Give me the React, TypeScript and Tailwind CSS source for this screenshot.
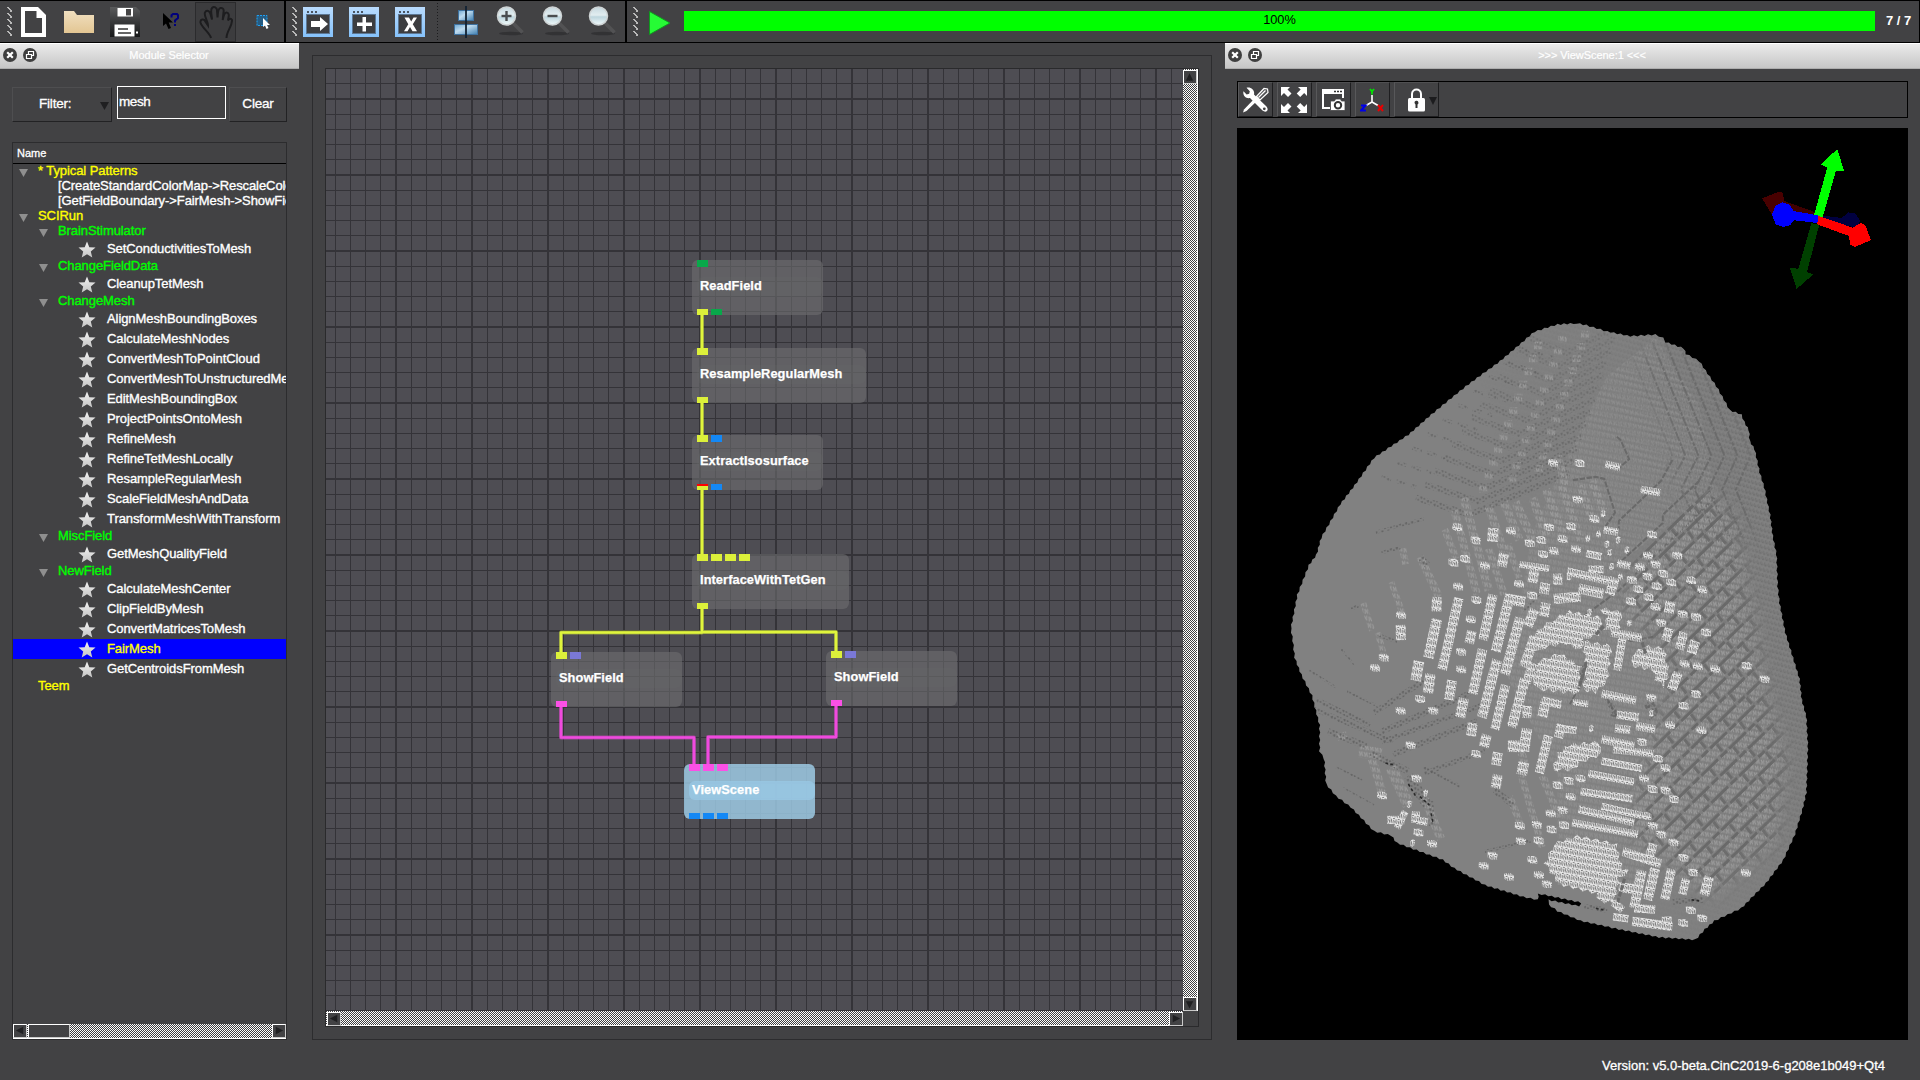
import React from "react";

const FONT = "font-['Liberation_Sans',Arial,sans-serif]";
const CHECK = "bg-[repeating-conic-gradient(#fff_0_25%,#3f3f41_0_50%)] bg-[length:2px_2px]";

/* ---------- small pieces ---------- */

function Grip() {
  return (
    <svg width="6" height="30" viewBox="0 0 6 30" shapeRendering="crispEdges" className="shrink-0">
      {[0, 6, 12, 18, 24].map((y) => (
        <path key={y} d={`M0 ${y + 0.5}h2M1 ${y + 1.5}h2M2 ${y + 2.5}h2M3 ${y + 3.5}h2M3 ${y + 4.5}h2`} stroke="#b9b9b9" />
      ))}
    </svg>
  );
}

function WindowIcon({ kind }: { kind: "arrow" | "plus" | "x" }) {
  return (
    <svg width="30" height="30" viewBox="0 0 30 30" className="shrink-0">
      <defs>
        <linearGradient id={"wi-" + kind} x1="0" y1="0" x2="0" y2="1">
          <stop offset="0" stopColor="#b9dbfd" />
          <stop offset="1" stopColor="#85c2fb" />
        </linearGradient>
      </defs>
      <rect width="30" height="30" fill={`url(#wi-${kind})`} />
      <path d="M4 4h2v2H4zM8 4h2v2H8zM12 4h2v2h-2z" fill="#4a5563" />
      <rect x="3.5" y="7.5" width="23" height="19" fill="#3c3d40" stroke="#5c7794" />
      {kind === "arrow" && <path d="M8 14h9v-4l8 7-8 7v-4H8z" fill="#fff" />}
      {kind === "plus" && <path d="M13.5 10h3.5v5.5h6V19h-6v5.500h-3.500V19H8v-3.500h5.500z" fill="#fff" />}
      {kind === "x" && <path d="M9.500 10.500h4.500l2.200 4 2.300-4H22l-4.200 6.800 4.200 7h-4.500l-2.500-4.300-2.500 4.300H9l4.300-7z" fill="#fff" />}
    </svg>
  );
}

function ZoomIcon({ sign }: { sign: "+" | "-" | "" }) {
  const id = sign === "+" ? "zin" : sign === "-" ? "zout" : "zfit";
  return (
    <svg width="30" height="30" viewBox="0 0 30 30" className="shrink-0">
      <defs>
        <linearGradient id={id} x1="0" y1="0" x2="0" y2="1">
          <stop offset="0" stopColor="#c6d8df" />
          <stop offset=".45" stopColor="#e2edf0" />
          <stop offset=".55" stopColor="#bdd5dd" />
          <stop offset="1" stopColor="#f2fbfc" />
        </linearGradient>
      </defs>
      <ellipse cx="15" cy="27.500" rx="12" ry="1.800" fill="#2c2c2e" opacity=".7" />
      <path d="M17 17l9.500 9.500" stroke="#525254" strokeWidth="3.500" />
      <circle cx="10.500" cy="10" r="9" fill={`url(#${id})`} stroke="#cfd4d5" strokeWidth="1.500" />
      {sign !== "" && <path d="M5.500 10h10" stroke="#4a4d4f" strokeWidth="2.400" />}
      {sign === "+" && <path d="M10.500 5v10" stroke="#4a4d4f" strokeWidth="2.400" />}
    </svg>
  );
}

function DockTitle({ title, className }: { title: string; className: string }) {
  return (
    <div className={"relative flex h-[26px] shrink-0 items-center justify-center border-t border-b border-t-white border-b-[#adadad] bg-linear-to-b from-[#ebebeb] to-[#c6c6c6] text-[11px] text-white [-webkit-text-stroke:0.200px] " + className}>
      <svg width="36" height="16" viewBox="0 0 36 16" className="absolute left-[2px] top-[3px]">
        <circle cx="8" cy="8" r="7" fill="#3f3f3f" />
        <path d="M5.200 5.200l5.600 5.600M10.800 5.200l-5.600 5.600" stroke="#fff" strokeWidth="2.200" />
        <circle cx="28" cy="8" r="7" fill="#3f3f3f" />
        <path d="M24.500 7.500h5v4h-5zM26.500 7v-2.500h5v4h-2" stroke="#fff" strokeWidth="1.200" fill="none" />
      </svg>
      <span className="pb-px">{title}</span>
    </div>
  );
}

function ArrowButton({ dir }: { dir: "l" | "r" | "u" | "d" }) {
  const d = { l: "M11 2.500v8L3 6.500z", r: "M4 2.500v8l8-4z", u: "M3 11h8L7 3z", d: "M3 4h8l-4 8z" }[dir];
  return (
    <div className="h-[14px] w-[14px] shrink-0 border border-white border-r-[#c9c9c9] border-b-[#c9c9c9] bg-[#424244]">
      <svg width="12" height="12" viewBox="1 0.500 13 13">
        <path d={d} fill="#1f1f21" />
      </svg>
    </div>
  );
}

/* ---------- top toolbar ---------- */

function TopBar() {
  return (
    <div className="flex h-[43px] shrink-0 bg-black py-px">
      <div className="flex h-[41px] w-[284px] items-center bg-[#424244] pl-[7px]">
        <Grip />
        <svg width="25" height="30" viewBox="0 0 25 30" className="ml-[8px]">
          <path fillRule="evenodd" fill="#fff" d="M0 0h17l8 8v22H0zM4 4v22h17V11h-5.500V4z" />
        </svg>
        <svg width="30" height="22" viewBox="0 0 30 22" className="ml-[18px]">
          <defs>
            <linearGradient id="fold" x1="0" y1="0" x2="0" y2="1">
              <stop offset="0" stopColor="#f0dfc0" />
              <stop offset="1" stopColor="#e3c693" />
            </linearGradient>
          </defs>
          <path d="M0 0h10l3 4h17v18H0z" fill="url(#fold)" />
        </svg>
        <svg width="30" height="30" viewBox="0 0 30 30" className="ml-[16px]">
          <defs>
            <linearGradient id="sv" x1="0" y1="0" x2="0" y2="1">
              <stop offset="0" stopColor="#5a5b5c" />
              <stop offset="1" stopColor="#161718" />
            </linearGradient>
          </defs>
          <path d="M0 0h26l4 4v26H0z" fill="url(#sv)" />
          <path d="M7.500 1h15.500v8.500H7.500z" fill="#fff" />
          <path d="M16 2h5v6.500h-5z" fill="#444" />
          <path d="M4.500 17.500h20v12h-20z" fill="#fff" />
          <path d="M8 22h10M8 26h13" stroke="#333" strokeWidth="1.500" />
          <path d="M26 24.500h2v2h-2z" fill="#fff" />
        </svg>
        <svg width="18" height="18" viewBox="0 0 18 18" className="ml-[22px]">
          <path d="M1 0v13l3-2.500 2.500 5.500 2.500-1-2.300-5.500H11z" fill="#000" />
          <path d="M9.500 4.500V2.200L11 1h4l1 1.200V5l-3 2.500v2M13 11v2" stroke="#00007c" strokeWidth="2" fill="none" />
        </svg>
        <div className="ml-[15px] flex h-[40px] w-[41px] items-start justify-center border border-[#2b2b2d] bg-[#3c3c3e] pt-[3px]">
          <svg width="34" height="34" viewBox="0 0 34 34" fill="none" stroke="#1d1d1f" strokeWidth="2">
            <path d="M12 32c-1-5-9-10-10.500-15.500C1 13 5 12.500 6 15l3 4.500C9 15 4.500 9.500 6 6.500S11 5 11.500 8l1.500 5.500C13 10 11 4 13 2s5-.5 5 2.500l.5 7c.5-4 0-9 3-9.500s3.500 2 3 4.500l-.8 7.500c1-4 1.300-7.500 3.800-7.500s2.500 3 2 5l-.5 3c1-2 3-2.500 4-.5.5 6-5.500 11-5.500 18" />
          </svg>
        </div>
        <svg width="16" height="16" viewBox="0 0 16 16" className="ml-[20px]">
          <rect x="1" y="1.500" width="10" height="10" fill="#255c83" stroke="#1fa1f4" strokeDasharray="2 1" />
          <path d="M7 4v9l2-1.500L10.500 15l2-1-1.500-3h3z" fill="#fff" />
        </svg>
      </div>
      <div className="ml-[2px] flex h-[41px] w-[339px] items-center bg-[#424244] pl-[6px]">
        <Grip />
        <div className="ml-[5px] flex gap-[16px]">
          <WindowIcon kind="arrow" />
          <WindowIcon kind="plus" />
          <WindowIcon kind="x" />
        </div>
        <div className="ml-[12px] h-[37px] w-px bg-[repeating-linear-gradient(#1c1c1e_0_1px,transparent_1px_3px)]" />
        <svg width="24" height="32" viewBox="0 0 24 32" className="ml-[16px] shrink-0">
          <defs>
            <linearGradient id="al" x1="0" y1="0" x2="1" y2="1">
              <stop offset="0" stopColor="#6fa8d2" />
              <stop offset=".4" stopColor="#bfdcf0" />
              <stop offset="1" stopColor="#3f7fb0" />
            </linearGradient>
          </defs>
          <rect x="4.500" y="4.500" width="15" height="10" fill="url(#al)" stroke="#3f72a0" />
          <rect x=".5" y="18.500" width="23" height="10" fill="url(#al)" stroke="#3f72a0" />
          <path d="M12 0v32" stroke="#123" strokeWidth="1.800" />
        </svg>
        <div className="mb-[2px] ml-[18px] flex gap-[16px]">
          <ZoomIcon sign="+" />
          <ZoomIcon sign="-" />
          <ZoomIcon sign="" />
        </div>
      </div>
      <div className="ml-[2px] mr-px flex h-[41px] flex-1 items-center bg-[#424244] pl-[6px]">
        <Grip />
        <svg width="22" height="24" viewBox="0 0 22 24" className="ml-[10px] mt-[3px]">
          <path d="M.5.500L21 12 .5 23.500z" fill="#26fb35" stroke="#0f9a1e" />
        </svg>
        <div className="mb-px ml-[13px] flex h-[20px] w-[1191px] items-center justify-center bg-[#00ff00] pb-[2px] text-[12.800px] text-black">
          100%
        </div>
        <span className="ml-[11px] pb-px text-[13px] font-bold whitespace-pre text-white">7 / 7</span>
      </div>
    </div>
  );
}

/* ---------- module selector ---------- */

type Row = { t: string; k: "top" | "cat" | "plain" | "mod" | "leaf"; sel?: boolean };
const ROWS: Row[] = [
  { t: "* Typical Patterns", k: "top" },
  { t: "[CreateStandardColorMap->RescaleColorMap]", k: "plain" },
  { t: "[GetFieldBoundary->FairMesh->ShowField]", k: "plain" },
  { t: "SCIRun", k: "top" },
  { t: "BrainStimulator", k: "cat" },
  { t: "SetConductivitiesToMesh", k: "mod" },
  { t: "ChangeFieldData", k: "cat" },
  { t: "CleanupTetMesh", k: "mod" },
  { t: "ChangeMesh", k: "cat" },
  { t: "AlignMeshBoundingBoxes", k: "mod" },
  { t: "CalculateMeshNodes", k: "mod" },
  { t: "ConvertMeshToPointCloud", k: "mod" },
  { t: "ConvertMeshToUnstructuredMesh", k: "mod" },
  { t: "EditMeshBoundingBox", k: "mod" },
  { t: "ProjectPointsOntoMesh", k: "mod" },
  { t: "RefineMesh", k: "mod" },
  { t: "RefineTetMeshLocally", k: "mod" },
  { t: "ResampleRegularMesh", k: "mod" },
  { t: "ScaleFieldMeshAndData", k: "mod" },
  { t: "TransformMeshWithTransform", k: "mod" },
  { t: "MiscField", k: "cat" },
  { t: "GetMeshQualityField", k: "mod" },
  { t: "NewField", k: "cat" },
  { t: "CalculateMeshCenter", k: "mod" },
  { t: "ClipFieldByMesh", k: "mod" },
  { t: "ConvertMatricesToMesh", k: "mod" },
  { t: "FairMesh", k: "mod", sel: true },
  { t: "GetCentroidsFromMesh", k: "mod" },
  { t: "Teem", k: "leaf" },
];

function Tri() {
  return (
    <svg width="9" height="8" viewBox="0 0 9 8" className="mt-[3px] mr-[14px] shrink-0">
      <path d="M0 0h9L4.500 8z" fill="#8f8f8f" />
    </svg>
  );
}

function TreeRow({ r }: { r: Row }) {
  if (r.k === "mod")
    return (
      <div className={"flex h-[20px] items-center pl-[65px] whitespace-nowrap " + (r.sel ? "bg-[#0000ff] text-[#ffff00]" : "text-white")}>
        <svg width="18" height="17" viewBox="0 0 18 17" className="mr-[11px] shrink-0">
          <defs>
            <linearGradient id="star" x1="0" y1="0" x2="0" y2="1">
              <stop offset="0" stopColor="#f2f2f2" />
              <stop offset="1" stopColor="#c4c4c4" />
            </linearGradient>
          </defs>
          <path d="M9 .5l2.300 5.700 6.200.4-4.700 4 1.500 6L9 13.300l-5.300 3.300 1.500-6-4.700-4 6.200-.4z" fill="url(#star)" />
        </svg>
        <span>{r.t}</span>
      </div>
    );
  if (r.k === "plain") return <div className="h-[15px] pl-[45px] leading-[13px] whitespace-nowrap text-white">{r.t}</div>;
  if (r.k === "leaf") return <div className="h-[15px] pl-[25px] leading-[13px] text-[#ffff00]">{r.t}</div>;
  return (
    <div className={"flex h-[15px] items-center leading-[13px] whitespace-nowrap " + (r.k === "top" ? "pl-[6px] text-[#ffff00]" : "pl-[26px] text-[#00ff00]")}>
      <Tri />
      <span className="-mt-[2px] -ml-[4px]">{r.t}</span>
    </div>
  );
}

function ModuleSelector() {
  const bevel = "border border-t-[#4e4e50] border-l-[#4e4e50] border-r-[#222224] border-b-[#222224]";
  return (
    <div className="flex w-[299px] shrink-0 flex-col">
      <DockTitle title="Module Selector" className="pl-[39px]" />
      <div className="mt-[17px] ml-[12px] flex items-start text-[13.500px] text-white [-webkit-text-stroke:0.300px]">
        <div className={"mt-px flex h-[35px] w-[100px] items-center pb-px pl-[26px] " + bevel}>
          <span className="w-[61px] tracking-[-0.200px]">Filter:</span>
          <svg width="9" height="8" viewBox="0 0 9 8" className="mt-[4px]">
            <path d="M0 0h9L4.500 8z" fill="#1f1f21" />
          </svg>
        </div>
        <div className="ml-[5px] flex h-[33px] w-[109px] border border-white pl-[1px] leading-[29px] tracking-[-0.400px]">mesh</div>
        <div className={"mt-px ml-[3px] flex h-[35px] w-[58px] items-center justify-center tracking-[-0.200px] " + bevel}>Clear</div>
      </div>
      <div className="mt-[20px] ml-[12px] flex h-[898px] w-[275px] flex-col overflow-hidden border border-[#2c2c2e]">
        <div className="flex h-[21px] shrink-0 items-center border-b border-black pl-[4px] text-[11px] text-white [-webkit-text-stroke:0.300px]">Name</div>
        <div className="flex-1 overflow-hidden text-[13px] tracking-[-0.080px] [-webkit-text-stroke:0.350px]">
          {ROWS.map((r, i) => (
            <TreeRow key={i} r={r} />
          ))}
        </div>
        <div className={"flex h-[15px] shrink-0 items-center border-b border-b-white " + CHECK}>
          <ArrowButton dir="l" />
          <div className="ml-[1px] h-[14px] w-[42px] border border-white border-r-[#c9c9c9] border-b-[#c9c9c9] bg-[#424244]" />
          <div className="flex-1" />
          <ArrowButton dir="r" />
        </div>
      </div>
    </div>
  );
}

/* ---------- network canvas ---------- */

const Y = "#dcf03a";
const G = "#08a84a";
const B = "#1488f5";
const V = "#7a78d6";
const P = "#fb50e6";

type ModuleNode = { n: string; x: number; y: number; w: number; i: string[]; o: string[]; blue?: boolean };
const NODES: ModuleNode[] = [
  { n: "ReadField", x: 692, y: 260, w: 131, i: [G], o: [Y, G] },
  { n: "ResampleRegularMesh", x: 692, y: 348, w: 174, i: [Y], o: [Y] },
  { n: "ExtractIsosurface", x: 692, y: 435, w: 131, i: [Y, B], o: [Y, B] },
  { n: "InterfaceWithTetGen", x: 692, y: 554, w: 157, i: [Y, Y, Y, Y], o: [Y] },
  { n: "ShowField", x: 551, y: 652, w: 131, i: [Y, V], o: [P] },
  { n: "ShowField", x: 826, y: 651, w: 131, i: [Y, V], o: [P] },
  { n: "ViewScene", x: 684, y: 764, w: 131, i: [P, P, P], o: [B, B, B], blue: true },
];

const WIRES: [string, string][] = [
  ["M702 314V350M702 403V437M702 489V556M702 608V632.500H561V654M702 632H836V653", "#e0f53c"],
  ["M561 706V737.500H694V766M836 705V737H708V766", "#f04ade"],
];

function Node({ m }: { m: ModuleNode }) {
  return (
    <div
      className={"absolute h-[55px] rounded-[6px] " + (m.blue ? "bg-[#a2d2ee]/80" : "bg-[#6e6e70]/60")}
      style={{ left: m.x - 326, top: m.y - 69, width: m.w }}
    >
      <div className="absolute top-0 left-[5px] flex gap-[3px]">
        {m.i.map((c, i) => (
          <div key={i} className="h-[7px] w-[11px]" style={{ background: c }} />
        ))}
      </div>
      <div
        className={"absolute top-[17px] right-0 left-[5px] h-[19px] rounded-[6px] pl-[3px] text-[12.800px] leading-[17px] font-bold tracking-[0.080px] whitespace-nowrap text-white [-webkit-text-stroke:0.250px] " + (m.blue ? "bg-[#9acbe8]/70" : "bg-[#666668]/25")}
      >
        {m.n}
      </div>
      <div className="absolute bottom-0 left-[5px] flex gap-[3px]">
        {m.o.map((c, i) => (
          <div
            key={i}
            className={"h-[6px] w-[11px] " + (m.n === "ExtractIsosurface" && i === 0 ? "border-t-2 border-[#ff0000]" : "")}
            style={{ backgroundColor: c }}
          />
        ))}
      </div>
    </div>
  );
}

function Canvas() {
  const offs = [16, 31, 46, 61];
  return (
    <div className="mt-[12px] ml-[13px] flex h-[985px] w-[900px] shrink-0 border border-[#2c2c2e]">
      <div className="mt-[12px] ml-[12px] flex h-[959px] w-[874px] flex-col border border-[#2a2a2c]">
        <div className="flex h-[942px]">
          <div className="relative h-[942px] w-[857px] overflow-hidden bg-[#4e4d53]">
            <svg width="857" height="942" viewBox="326 69 857 942" className="absolute inset-0">
              <defs>
                <pattern id="grid" x="395" y="22" width="76" height="76" patternUnits="userSpaceOnUse">
                  <path d="M0 0h2v76h-2zM0 0h76v2h-76z" fill="#343338" />
                  {offs.map((o) => (
                    <path key={o} d={`M${o} 0h1v76h-1zM0 ${o}h76v1h-76z`} fill="#343338" />
                  ))}
                </pattern>
              </defs>
              <rect x="326" y="69" width="857" height="942" fill="url(#grid)" shapeRendering="crispEdges" />
              {WIRES.map(([d, c]) => (
                <g key={c} fill="none" stroke={c} strokeLinejoin="round">
                  <path d={d} strokeWidth="4" opacity=".5" />
                  <path d={d} strokeWidth="2.400" />
                </g>
              ))}
            </svg>
            {NODES.map((m, i) => (
              <Node key={i} m={m} />
            ))}
          </div>
          <div className={"flex w-[15px] flex-col justify-between border-r border-r-white pt-px " + CHECK}>
            <ArrowButton dir="u" />
            <ArrowButton dir="d" />
          </div>
        </div>
        <div className="flex h-[15px]">
          <div className={"flex w-[857px] justify-between border-b border-b-white pl-px pt-px " + CHECK}>
            <ArrowButton dir="l" />
            <ArrowButton dir="r" />
          </div>
          <div className="flex-1" />
        </div>
      </div>
    </div>
  );
}

/* ---------- mesh rendering ---------- */

const OUTLINE_POINTS =
  "880,55 905,60 960,75 1020,86 1085,82 1105,90 1112,100 1160,115 1165,128 1200,145 1222,175 1245,205 1280,262 1310,272 1318,290 1330,310 1332,335 1345,355 1358,410 1370,445 1385,510 1392,560 1402,605 1405,680 1410,720 1425,790 1445,850 1462,900 1468,950 1480,990 1484,1060 1482,1120 1480,1170 1470,1210 1450,1270 1420,1330 1375,1385 1310,1445 1240,1475 1215,1495 1190,1520 1095,1514 990,1495 890,1475 830,1452 806,1436 806,1425 885,1440 892,1432 780,1410 778,1425 740,1418 640,1390 560,1350 530,1330 410,1290 395,1272 350,1262 290,1205 250,1178 225,1150 220,1090 208,1072 208,1010 188,940 160,890 143,850 138,810 133,780 150,700 180,630 200,605 212,565 262,485 300,440 350,375 440,320 500,272 590,205 680,145 770,75 830,58";

/* breaks every silhouette edge into short steps so that it reads as a voxel boundary */
function stepped(points: string, step: number, amp: number) {
  const p = points.split(" ").map((s) => s.split(",").map(Number));
  let d = "";
  let k = 0;
  p.forEach(([x, y], i) => {
    const [nx, ny] = p[(i + 1) % p.length];
    const len = Math.hypot(nx - x, ny - y);
    const n = Math.max(1, Math.round(len / step));
    for (let j = 0; j < n; j++) {
      const s = (k++ % 2 ? 1 : -1) * amp;
      const px = x + ((nx - x) * j) / n + (s * (ny - y)) / len;
      const py = y + ((ny - y) * j) / n - (s * (nx - x)) / len;
      d += (d ? "L" : "M") + px.toFixed(1) + " " + py.toFixed(1);
    }
  });
  return d + "z";
}
const OUTLINE = stepped(OUTLINE_POINTS, 9, 1.6);

const STRIPS: number[][] = [
  [515, 706, 513, 740, 26], [515, 758, 492, 850, 27], [468, 858, 459, 904, 28], [572, 708, 528, 878, 25], [498, 888, 491, 934, 27],
  [554, 904, 546, 950, 26], [661, 700, 635, 808, 25], [606, 786, 599, 816, 25], [634, 830, 608, 936, 25], [585, 946, 575, 992, 27],
  [706, 700, 668, 835, 26], [698, 710, 745, 718, 26], [672, 855, 632, 992, 26], [732, 755, 692, 890, 26], [694, 915, 666, 1020, 24],
  [770, 800, 742, 872, 26], [745, 900, 710, 1015, 26], [738, 978, 762, 978, 30], [806, 1035, 782, 1124, 24], [750, 1018, 742, 1072, 28],
  [700, 1060, 745, 1060, 28], [674, 1075, 669, 1105, 26], [674, 1128, 668, 1160, 26], [742, 1098, 736, 1128, 28], [608, 1005, 604, 1036, 26],
  [645, 1033, 637, 1062, 26], [730, 628, 808, 638, 16], [770, 638, 764, 672, 26], [830, 650, 830, 676, 24], [855, 645, 985, 672, 20],
  [980, 660, 966, 700, 26], [885, 685, 950, 698, 24], [820, 710, 890, 705, 24], [770, 735, 752, 775, 26], [800, 720, 794, 752, 26],
  [798, 672, 794, 698, 26], [690, 602, 684, 634, 26], [662, 542, 660, 574, 28], [1000, 800, 985, 880, 22], [970, 790, 1050, 803, 20],
  [1145, 885, 1128, 926, 26], [1160, 790, 1148, 830, 24], [1122, 780, 1112, 810, 24], [1190, 810, 1180, 840, 26], [1125, 716, 1120, 744, 26],
  [945, 935, 1035, 952, 20], [985, 985, 1042, 992, 20], [980, 1018, 1020, 1022, 20], [1035, 1012, 1085, 1020, 20], [790, 952, 840, 962, 20],
  [800, 950, 790, 990, 26], [870, 955, 910, 960, 16], [945, 1043, 1030, 1060, 20], [975, 1068, 1080, 1078, 18], [945, 1095, 1050, 1113, 18],
  [910, 1125, 1030, 1145, 18], [890, 1168, 1025, 1185, 18], [945, 1203, 1050, 1225, 18], [885, 1210, 1030, 1242, 18], [868, 1242, 1040, 1270, 18],
  [1000, 1310, 1100, 1340, 22], [1080, 1292, 1068, 1330, 24], [1050, 1355, 1030, 1445, 26], [1085, 1350, 1065, 1425, 26], [1128, 1352, 1110, 1424, 24],
  [1166, 1375, 1156, 1412, 22], [1226, 1370, 1213, 1414, 26], [975, 1465, 1015, 1470, 18], [1025, 1476, 1130, 1488, 22], [1115, 1465, 1115, 1495, 26],
  [1030, 1445, 1085, 1448, 20], [840, 1008, 832, 1040, 24], [835, 1018, 880, 1022, 18], [420, 772, 420, 808, 26], [905, 602, 945, 610, 18],
  [1047, 450, 1098, 458, 18], [955, 390, 993, 398, 18], [950, 545, 988, 552, 18], [985, 625, 1020, 632, 18], [385, 1235, 430, 1235, 20],
  [432, 1215, 410, 1255, 18], [460, 1215, 458, 1242, 22], [462, 1236, 490, 1240, 18], [910, 640, 950, 640, 18], [760, 822, 800, 815, 26],
  [765, 862, 748, 910, 22], [990, 1395, 1035, 1400, 24], [975, 1430, 1000, 1450, 20],
];

const BLOBS: number[][] = [
  [818, 387], [888, 388], [882, 474], [926, 520], [568, 540], [708, 548], [616, 571], [808, 540], [865, 538], [757, 578], [787, 570],
  [843, 568], [1077, 557], [820, 596], [878, 592], [792, 604], [588, 615], [558, 624], [640, 631], [570, 681], [618, 713], [603, 759],
  [578, 836], [578, 878], [421, 749], [376, 850], [353, 874], [471, 948], [420, 976], [505, 976], [446, 1058], [617, 1078], [461, 1137],
  [371, 1177], [466, 1265], [502, 1292], [660, 1320], [637, 1344], [703, 1371], [764, 1330], [781, 1366], [802, 1388], [734, 1286],
  [731, 1249], [776, 1247], [780, 1284], [814, 1258], [847, 1248], [812, 1220], [843, 1212], [864, 1180], [830, 1153], [859, 1142],
  [890, 1137], [1066, 607], [1143, 607], [1045, 634], [1086, 628], [1106, 650], [1065, 657], [1024, 665], [1127, 671], [1179, 666],
  [1208, 688], [1089, 680], [1041, 687], [1068, 706], [1022, 716], [1086, 729], [1157, 746], [1192, 753], [1101, 767], [1218, 790],
  [1162, 864], [1196, 870], [1242, 877], [1324, 869], [1371, 901], [1192, 936], [1159, 964], [1124, 1010], [1206, 1022], [1075, 945],
  [1051, 1050], [1092, 1090], [1112, 1112], [1056, 1137], [1078, 1162], [1112, 1165], [1134, 1186], [1079, 1249], [1101, 1270],
  [1133, 1289], [1159, 1325], [1184, 1360], [1322, 1361], [1178, 1450], [1158, 1480], [1208, 1469], [1062, 1226], [729, 674], [764, 702],
];

/* half-width facets */
const SPECKS: number[][] = [
  [949, 508], [909, 567], [937, 556], [988, 570], [959, 580], [966, 600], [1011, 594], [971, 633], [994, 658], [1017, 768], [918, 1018],
  [485, 1172], [442, 1198], [451, 1290], [914, 742], [1075, 982], [860, 658],
];

const FIELDS = [
  "825,755 860,740 945,755 938,795 900,805 890,832 850,815 770,830 758,802 790,777",
  "780,858 835,840 890,870 885,935 780,925 762,900",
  "895,810 970,822 960,905 930,932 897,926 905,870",
  "942,732 998,742 988,790 952,785 960,752",
  "1030,837 1065,823 1108,828 1120,885 1110,920 1087,903 1080,880 1022,868",
  "820,1292 880,1273 983,1292 998,1352 1018,1358 990,1372 978,1433 940,1428 932,1410 835,1388 797,1340",
  "817,1116 832,1077 860,1057 938,1050 943,1080 890,1098 870,1116",
].map((p) => stepped(p, 13, 4));

/* raised light terraces */
const LIGHT: number[][] = [
  [425, 590, 433, 628, 18], [470, 610, 520, 705, 20], [395, 670, 425, 745, 16], [322, 720, 345, 785, 16], [360, 790, 378, 850, 16],
  [535, 545, 565, 615, 18], [560, 500, 620, 700, 20], [585, 470, 650, 690, 22], [650, 490, 690, 600, 22], [690, 480, 730, 570, 22],
  [720, 480, 765, 570, 22], [765, 470, 800, 560, 22], [800, 450, 845, 560, 22], [840, 440, 890, 570, 20], [830, 370, 850, 440, 20],
  [890, 440, 920, 520, 20], [920, 430, 950, 500, 20], [345, 1090, 372, 1170, 22], [395, 1110, 440, 1200, 30], [480, 1180, 525, 1280, 22],
  [735, 1075, 745, 1100, 20], [735, 1130, 790, 1300, 18], [790, 1130, 835, 1230, 20], [705, 1180, 735, 1250, 18], [255, 1038, 280, 1035, 20],
  [310, 1072, 370, 1080, 30], [650, 590, 690, 700, 20], [700, 580, 730, 660, 18],
];

/* shaded gutters */
const SHADE: number[][] = [
  [350, 980, 480, 905, 14], [370, 1025, 600, 935, 14], [370, 1050, 640, 960, 12], [400, 1080, 620, 1000, 14], [480, 1125, 640, 1070, 12],
  [200, 950, 340, 1010, 12], [190, 970, 400, 1050, 12], [230, 1025, 330, 1060, 16], [340, 1075, 440, 1120, 16], [440, 1130, 490, 1200, 26],
  [500, 1190, 500, 1250, 14], [480, 1110, 575, 1155, 8], [280, 930, 360, 965, 6], [180, 880, 250, 920, 6], [265, 830, 300, 868, 5],
  [360, 795, 410, 812, 8], [665, 1165, 715, 1200, 16], [355, 552, 480, 520, 8], [290, 735, 312, 725, 8], [370, 600, 420, 588, 8],
  [470, 610, 490, 630, 16], [640, 1310, 760, 1285, 8], [740, 740, 790, 690, 8], [270, 1160, 350, 1200, 5], [250, 1110, 320, 1140, 5],
  [950, 930, 985, 990, 14], [1130, 1430, 1210, 1425, 14], [900, 870, 880, 920, 12], [1060, 960, 1090, 985, 14], [900, 1440, 960, 1450, 12],
];

const CREASES =
  "M985 325l10 8 22 45-25 20M870 428l60-8 22 5 28 80-30 40M1130 380l-30 50-110 95v20M1200 430l-95 80v20l-120 100M1240 470l-250 220-90 60M950 930l35 60-20-5M905 870l-18 50-25 40M1060 970l20-12 10 20-20 20M1080 800l-60 10-40-40";

function Lines({ data, stroke }: { data: number[][]; stroke: string }) {
  return (
    <g stroke={stroke}>
      {data.map(([a, b, c, d, w], i) => (
        <line key={i} x1={a} y1={b} x2={c === a ? c + 0.5 : c} y2={d === b ? d + 0.5 : d} strokeWidth={w} />
      ))}
    </g>
  );
}

function Heart() {
  const chev = Array.from({ length: 13 }, (_, k) => k);
  return (
    <svg x="3" y="172" width="600" height="660" viewBox="0 0 1568 1568" preserveAspectRatio="none">
      <defs>
        <clipPath id="body"><path d={OUTLINE} /></clipPath>
        <pattern id="white" width="12" height="15" patternUnits="userSpaceOnUse" patternTransform="rotate(9)">
          <rect width="12" height="15" fill="#e6e6e6" />
          <path d="M0 2.500L4 6V10M8 0V5L11 10M0 14h5" stroke="#777" strokeWidth="2.800" fill="none" />
        </pattern>
        <pattern id="light" width="13" height="16" patternUnits="userSpaceOnUse" patternTransform="rotate(9)">
          <path d="M2 1v6l3 5M8 2l3 5v6" stroke="#9c9c9c" strokeWidth="3.200" fill="none" />
        </pattern>
        <pattern id="dark" width="16" height="11" patternUnits="userSpaceOnUse" patternTransform="rotate(-8)">
          <path d="M1 2h6M9 7h5M4 2v4M11 5v3" stroke="#5f5f5f" strokeWidth="2.800" fill="none" />
        </pattern>
        <pattern id="grain" width="10" height="13" patternUnits="userSpaceOnUse" patternTransform="rotate(14)">
          <path d="M2 0v5l3 4M7 3v6" stroke="#6c6c6c" strokeWidth="2.600" fill="none" />
        </pattern>
        <linearGradient id="edge" gradientUnits="userSpaceOnUse" x1="800" y1="800" x2="1480" y2="600">
          <stop offset="0" stopColor="#fff" stopOpacity="0" />
          <stop offset=".5" stopColor="#fff" stopOpacity=".3" />
          <stop offset="1" stopColor="#fff" stopOpacity="1" />
        </linearGradient>
        <mask id="edgeMask"><rect width="1568" height="1568" fill="url(#edge)" /></mask>
        <filter id="soft" x="-10%" y="-10%" width="120%" height="120%"><feGaussianBlur stdDeviation="22" /></filter>
        <mask id="slope">
          <path filter="url(#soft)" fill="#fff" d="M1030 600L1150 400L1290 500L1350 780L1370 900L1430 1100L1400 1290L1230 1420L1130 1350L1020 1270L1040 1150L1090 1000L1130 900L1080 800L1000 740z" />
        </mask>
        <mask id="crown">
          <path filter="url(#soft)" fill="#fff" d="M1085 90L1180 115L1300 270L1360 440L1330 590L1180 560L1130 420L1130 350L1085 240L1040 150z" />
        </mask>
      </defs>
      <path d={OUTLINE} fill="#818181" />
      <g clipPath="url(#body)">
        <path d="M850 380L960 180L1085 90L1200 250L1240 450L1000 620L1120 880L1050 1400L830 1390L830 1130L700 900L760 560z" fill="url(#light)" opacity=".5" />
        <rect width="1568" height="1568" fill="url(#grain)" mask="url(#edgeMask)" />
        <g fill="none" stroke="url(#dark)" strokeWidth="15">
          {chev.map((k) => (
            <path key={k} d={`M${460 + k * 24} ${470 - k * 32}l${140 - k * 3} 40l${260 - k * 10} -${100 - k * 3}`} opacity={0.85 - k * 0.03} />
          ))}
          {chev.slice(0, 10).map((k) => (
            <path key={k} d={`M${370 + k * 40} ${420 - k * 34}l90 24`} strokeWidth="9" strokeDasharray="26 14" opacity=".8" />
          ))}
        </g>
        <g fill="url(#light)">
          {chev.slice(0, 12).map((k) => (
            <g key={k}>
              <path d={`M${625 + k * 13} ${440 - k * 31}h22v18h-22zM${700 + k * 12} ${415 - k * 30}h22v16h-22zM${770 + k * 11} ${392 - k * 29}h22v16h-22z`} />
            </g>
          ))}
        </g>
        <g mask="url(#crown)" stroke="#666" strokeWidth="5" fill="none" strokeDasharray="22 5 8 4">
          {[0, 1, 2, 3, 4, 5, 6].map((k) => (
            <path key={k} d={`M${1010 + k * 34} 100L${1130 + k * 34} 370L${1080 + k * 36} 450L${1170 + k * 32} 600`} opacity=".8" />
          ))}
        </g>
        <path d={CREASES} fill="none" stroke="#696969" strokeWidth="5" strokeDasharray="14 4" />
        <g mask="url(#slope)">
          {Array.from({ length: 26 }, (_, k) => (
            <g key={k}>
              <line x1="900" y1={760 + k * 44} x2="1500" y2={230 + k * 44} stroke="url(#light)" strokeWidth="24" strokeDasharray="70 10" strokeDashoffset={k * 23} />
              <line x1="900" y1={740 + k * 44} x2="1500" y2={210 + k * 44} stroke="#646464" strokeWidth="7" strokeDasharray="58 9 22 8" strokeDashoffset={k * 31} opacity=".8" />
              <line x1="900" y1={760 + k * 44} x2="1500" y2={230 + k * 44} stroke="#656565" strokeWidth="20" strokeDasharray="7 73" strokeDashoffset={k * 23 + 10} opacity=".7" />
            </g>
          ))}
        </g>
        <Lines data={LIGHT} stroke="url(#light)" />
        <Lines data={SHADE} stroke="url(#dark)" />
        <g fill="url(#white)">
          {FIELDS.map((d, i) => (
            <path key={i} d={d} />
          ))}
          {BLOBS.map(([x, y], i) => (
            <path key={i} d={`M${x - 13} ${y - 9}h18l8 5v13h-17l-9-5z`} />
          ))}
          {SPECKS.map(([x, y], i) => (
            <path key={i} d={`M${x - 6} ${y - 5}l6-4 6 2v12l-7 4-5-3z`} />
          ))}
        </g>
        <Lines data={STRIPS} stroke="url(#white)" />
        <g stroke="#6a6a6a" strokeWidth="8" fill="none" strokeDasharray="12 4">
          <path d="M905 860l-20 65M950 775l-20 20M1005 1375l-18 55M1060 840l-10 -30" />
        </g>
        <path d="M440 1150l20 30M470 1180l25 20M380 1100l25 5M500 1220l5 25M1180 1425l25 3M930 1445l25 5" stroke="#2a2a2a" strokeWidth="4" strokeDasharray="7 6" />
      </g>
    </svg>
  );
}

function Axes() {
  return (
    <svg x="503" y="2" width="160" height="170" viewBox="0 0 480 510">
      <g shapeRendering="crispEdges">
        <path d="M130 212L235 250L232 268L100 228z" fill="#3f0000" />
        <path d="M66 205L115 186L128 188L133 212L95 252z" fill="#480000" />
        <path d="M235 255L305 264L325 247L345 250L361 272L350 292L235 275z" fill="#000040" />
        <path d="M214 280L238 283L201 426L220 433L170 477L150 414L175 416z" fill="#004000" />
        <path d="M222 256L262 112L242 103L292 57L312 123L288 122L248 262z" fill="#00ff00" />
        <path d="M234 256L160 243L150 224L128 217L107 226L96 254L107 283L130 291L150 286L162 271L234 279z" fill="#0000ff" />
        <path d="M234 257L338 293L362 279L376 286L393 330L345 351L330 343L327 318L232 283z" fill="#ff0000" />
      </g>
    </svg>
  );
}

function ToolButton({ w, children }: { w: string; children: React.ReactNode }) {
  return (
    <div className={"flex h-[35px] items-center border border-t-[#505052] border-l-[#58585a] border-r-[#1e1e20] border-b-[#1e1e20] " + w}>
      {children}
    </div>
  );
}

function ViewScene() {
  return (
    <div className="ml-[13px] flex w-[695px] shrink-0 flex-col">
      <DockTitle title=">>> ViewScene:1 <<<" className="pl-[39px] tracking-[-0.050px]" />
      <div className="mt-[12px] ml-[12px] flex h-[37px] w-[671px] gap-[4px] border border-black">
        <ToolButton w="w-[35px] pl-[4px]">
          <svg width="26" height="26" viewBox="0 0 26 26">
            <path d="M0 25.500l1-3L13 10l2.500 2.500L3.500 24z" fill="#fff" />
            <path d="M13.500 9.500L21 1.500l3.500.5.5 3.500-8 7.500z" fill="#505052" stroke="#fff" strokeWidth="1.200" />
            <path d="M15.500 10.500l7-7" stroke="#fff" strokeWidth="1.200" />
            <path d="M3.500.8l3.300 3.400-.6 2.600-2.600.6L.5 4.300C-.5 8 2.500 12 7 11l12.500 12.500c3.500 3 7-.5 4-4L11 7.500C12 3.500 8-.5 3.500.8z" fill="#fff" />
            <circle cx="21.300" cy="21.800" r="1.400" fill="#424244" />
          </svg>
        </ToolButton>
        <ToolButton w="w-[35px] pl-[3px]">
          <svg width="26" height="26" viewBox="0 0 26 26" fill="#fff">
            <path d="M0 0h9L6.500 2.500l4 4-3.500 3.500-4-4L0 9zM26 0v9l-2.800-3-4 4-3.500-3.500 4-4L17 0zM0 26v-9l3 3 4-4 3.500 3.500-4 4L9 26zM26 26h-9l2.700-2.500-4-4 3.500-3.500 4 4L26 17z" />
          </svg>
        </ToolButton>
        <ToolButton w="w-[35px] pl-[5px]">
          <svg width="24" height="22" viewBox="0 0 24 22">
            <path fillRule="evenodd" fill="#fff" d="M0 0h22v9h-2V5H2v13h6v2H0z" />
            <path d="M12 2.500h2M15 2.500h2M18 2.500h2" stroke="#333" strokeWidth="1.500" />
            <path d="M8.500 12h4l1-2h5l1 2H23v9.500H8.500z" fill="#fff" stroke="#424244" strokeWidth=".8" />
            <circle cx="16" cy="16.300" r="3.200" fill="none" stroke="#333" strokeWidth="2" />
          </svg>
        </ToolButton>
        <ToolButton w="w-[35px] pl-[4px]">
          <svg width="24" height="24" viewBox="0 0 24 24" fill="none">
            <path d="M12 7v7l-6 3.500M12 14l6 3.500" stroke="#fff" strokeWidth="1.600" />
            <path d="M10 1l2 2.500L14 1M12 3v3.500" stroke="#00e000" strokeWidth="1.800" />
            <path d="M1 17.500h4.500L1 22.500h5" stroke="#0000e8" strokeWidth="2" />
            <path d="M18 17l5 6M23 17l-5 6" stroke="#e80000" strokeWidth="2" />
          </svg>
        </ToolButton>
        <ToolButton w="w-[45px] pl-[13px]">
          <svg width="30" height="24" viewBox="0 0 30 24">
            <path d="M4 11V6c0-6 9-6 9 0v5" fill="none" stroke="#fff" strokeWidth="2" />
            <rect x="0" y="10" width="17" height="13.500" rx="1.500" fill="#fff" />
            <path d="M6.500 15a2 2 0 1 1 3 1.500V20h-2v-3.500z" fill="#333" />
            <path d="M21 9h8l-4 8z" fill="#1c1c1e" />
          </svg>
        </ToolButton>
      </div>
      <svg width="671" height="912" viewBox="0 0 671 912" className="mt-[10px] ml-[12px]">
        <rect width="671" height="912" fill="#000" />
        <Axes />
        <Heart />
      </svg>
    </div>
  );
}

export default function App() {
  return (
    <div className={"flex h-[1080px] w-[1920px] flex-col overflow-hidden bg-[#424244] " + FONT}>
      <TopBar />
      <div className="flex h-[997px] shrink-0">
        <ModuleSelector />
        <Canvas />
        <ViewScene />
      </div>
      <div className="flex justify-end pt-[16px] pr-[35px] text-[13px] text-white [-webkit-text-stroke:0.300px]">
        Version: v5.0-beta.CinC2019-6-g208e1b049+Qt4
      </div>
    </div>
  );
}
